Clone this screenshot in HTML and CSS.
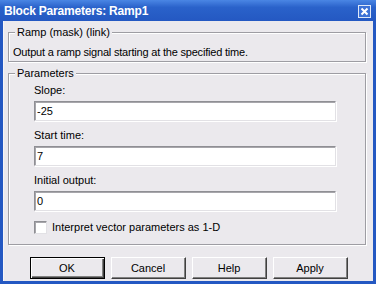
FILE: index.html
```html
<!DOCTYPE html>
<html lang="en">
<head>
    <meta charset="UTF-8">
    <meta name="viewport" content="width=device-width, initial-scale=1.0">
    <title>Block Parameters: Ramp1</title>
    <link rel="stylesheet" href="styles.css">
</head>
<body>
    <div class="window">
        <div class="titlebar">
            <span class="title">Block Parameters: Ramp1</span>
            <span class="close-btn">
                <svg width="13" height="13" viewBox="0 0 13 13">
                    <rect x="0.5" y="0.5" width="12" height="12" fill="#3d72d6" stroke="#dfe8f8"/>
                    <path d="M3.5 3.5 L9.5 9.5 M9.5 3.5 L3.5 9.5" stroke="#fff" stroke-width="2"/>
                </svg>
            </span>
        </div>
        <div class="client">
            <fieldset class="group group-desc">
                <legend>Ramp (mask) (link)</legend>
                <p class="desc">Output a ramp signal starting at the specified time.</p>
            </fieldset>
            <fieldset class="group group-params">
                <legend>Parameters</legend>
                <div class="params">
                    <label class="field-label">Slope:</label>
                    <input class="field" type="text" value="-25">
                    <label class="field-label">Start time:</label>
                    <input class="field" type="text" value="7">
                    <label class="field-label">Initial output:</label>
                    <input class="field" type="text" value="0">
                    <label class="check">
                        <span class="checkbox"></span>
                        Interpret vector parameters as 1-D
                    </label>
                </div>
            </fieldset>
            <div class="buttons">
                <button class="btn btn-default">OK</button>
                <button class="btn">Cancel</button>
                <button class="btn">Help</button>
                <button class="btn">Apply</button>
            </div>
        </div>
    </div>
</body>
</html>
```

FILE: styles.css
```css
body {
    margin: 0;
    font-family: "Liberation Sans", Arial, sans-serif;
    font-size: 11px;
    color: #000;
}

.window {
    width: 376px;
    height: 284px;
    box-sizing: border-box;
    display: flex;
    flex-direction: column;
    background-color: #2a5fc6;
    border: 3px solid #2458c2;
    border-top: none;
}

.titlebar {
    height: 21px;
    margin: 0 -3px;
    padding: 0 5px 0 4px;
    display: flex;
    align-items: center;
    justify-content: space-between;
    background: linear-gradient(#4a86e4, #2a62ca 35%, #2458c2);
}

.title {
    color: #fff;
    font-weight: bold;
    font-size: 12px;
    letter-spacing: -0.2px;
}

.close-btn {
    display: flex;
    margin-top: 1px;
}

.client {
    flex: 1;
    display: flex;
    flex-direction: column;
    background-color: #ebe9ed;
    border-left: 1px solid #f6f5f7;
}

.group {
    margin: 0 7px 0 4px;
    padding: 0 0 0 5px;
    border: 1px solid #9e9da3;
    box-shadow: 1px 1px 0 #fff, inset 1px 1px 0 #fff;
    min-width: 0;
}

.group legend {
    margin-left: 1px;
    padding: 0 2px;
    line-height: 13px;
    background-color: #ebe9ed;
}

.group-desc {
    margin-top: 5px;
}

.desc {
    margin: 7px 0 2px -1px;
    line-height: 13px;
    letter-spacing: -0.2px;
}

.group-params {
    margin-top: 5px;
}

.params {
    display: flex;
    flex-direction: column;
    align-items: flex-start;
    margin: 4px 0 10px 20px;
}

.field-label {
    line-height: 13px;
    margin-bottom: 4px;
}

.field {
    width: 302px;
    height: 20px;
    box-sizing: border-box;
    margin: 0 0 8px;
    padding: 0 2px;
    font-family: inherit;
    font-size: 11px;
    border: 1px solid;
    border-color: #8f8f94 #e2e1e5 #e2e1e5 #8f8f94;
    box-shadow: inset 1px 1px 0 #a7a6ab, 1px 1px 0 #fff;
    background-color: #fff;
    outline: none;
}

.check {
    display: flex;
    align-items: center;
    gap: 5px;
    margin-top: 2px;
    line-height: 13px;
}

.checkbox {
    width: 13px;
    height: 13px;
    box-sizing: border-box;
    border: 1px solid;
    border-color: #8f8f94 #e2e1e5 #e2e1e5 #8f8f94;
    box-shadow: inset 1px 1px 0 #a7a6ab;
    background-color: #fff;
}

.buttons {
    display: flex;
    justify-content: center;
    gap: 6px;
    margin-top: 12px;
}

.btn {
    width: 75px;
    height: 22px;
    padding: 0;
    font-family: inherit;
    font-size: 11px;
    color: #000;
    background-color: #ebe9ed;
    border: 1px solid;
    border-color: #fff #404040 #404040 #fff;
    box-shadow: inset -1px -1px 0 #808080;
}

.btn-default {
    border-color: #000;
    box-shadow: inset 1px 1px 0 #fff, inset -1px -1px 0 #404040, inset -2px -2px 0 #808080;
}
```
